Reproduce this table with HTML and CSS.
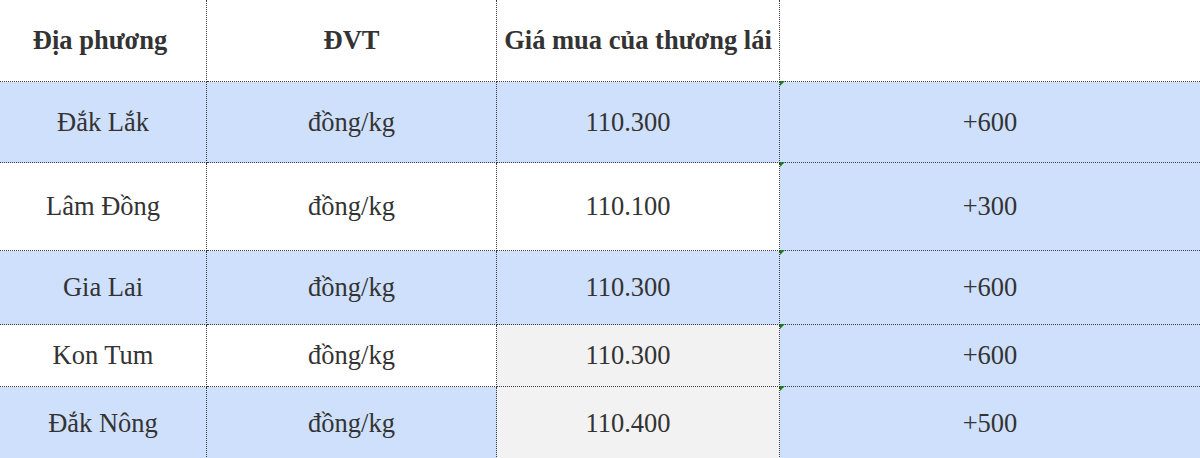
FILE: index.html
```html
<!DOCTYPE html>
<html lang="vi">
<head>
<meta charset="utf-8">
<title>Giá cà phê</title>
<link rel="stylesheet" href="styles.css">
</head>
<body>
<div class="sheet">
  <div class="row head">
    <div class="cell c1">Địa phương</div>
    <div class="cell c2">ĐVT</div>
    <div class="cell c3">Giá mua của thương lái</div>
    <div class="cell c4"></div>
  </div>
  <div class="row r1">
    <div class="cell c1 blue">Đắk Lắk</div>
    <div class="cell c2 blue">đồng/kg</div>
    <div class="cell c3 blue num">110.300</div>
    <div class="cell c4 blue mark">+600</div>
  </div>
  <div class="row r2">
    <div class="cell c1">Lâm Đồng</div>
    <div class="cell c2">đồng/kg</div>
    <div class="cell c3 num">110.100</div>
    <div class="cell c4 blue mark">+300</div>
  </div>
  <div class="row r3">
    <div class="cell c1 blue">Gia Lai</div>
    <div class="cell c2 blue">đồng/kg</div>
    <div class="cell c3 blue num">110.300</div>
    <div class="cell c4 blue mark">+600</div>
  </div>
  <div class="row r4">
    <div class="cell c1">Kon Tum</div>
    <div class="cell c2">đồng/kg</div>
    <div class="cell c3 grey num">110.300</div>
    <div class="cell c4 blue mark">+600</div>
  </div>
  <div class="row r5">
    <div class="cell c1 blue">Đắk Nông</div>
    <div class="cell c2 blue">đồng/kg</div>
    <div class="cell c3 grey num">110.400</div>
    <div class="cell c4 blue mark">+500</div>
  </div>
</div>
</body>
</html>
```
FILE: styles.css
```css
html, body {
  margin: 0;
  padding: 0;
  background: #ffffff;
}
body {
  width: 1200px;
  height: 458px;
  overflow: hidden;
  font-family: "Liberation Serif", "Times New Roman", serif;
  font-size: 26.5px;
  color: #333333;
}
.sheet {
  display: flex;
  flex-direction: column;
  width: 1200px;
}
.row {
  display: grid;
  grid-template-columns: 207px 290px 283px 420px;
}
.head { height: 82px; font-weight: bold; }
.r1 { height: 81px; }
.r2 { height: 88px; }
.r3 { height: 74px; }
.r4 { height: 62px; }
.r5 { height: 72px; }
.cell {
  box-sizing: border-box;
  display: flex;
  align-items: center;
  justify-content: center;
  white-space: nowrap;
  border-bottom: 1px dotted #3c3c3c;
  position: relative;
}
.r5 .cell { border-bottom: none; }
.c1, .c2, .c3 { border-right: 1px dotted #3c3c3c; }
.head .c1 { padding-right: 6px; }
.num { padding-right: 20px; }
.blue { background: #cfe0fc; }
.grey { background: #f2f2f2; }
.mark::before {
  content: "";
  position: absolute;
  left: 0;
  top: -1px;
  width: 0;
  height: 0;
  border-top: 5px solid #1f7a1f;
  border-right: 5px solid transparent;
}
```
